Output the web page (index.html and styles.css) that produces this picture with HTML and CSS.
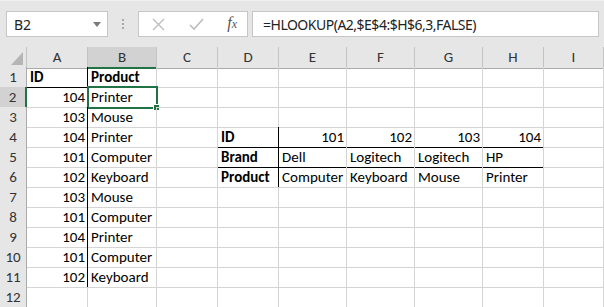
FILE: index.html
```html
<!DOCTYPE html>
<html lang="en">

<head>
    <meta charset="UTF-8">
    <meta name="viewport" content="width=device-width, initial-scale=1.0">
    <title>HLOOKUP</title>
    <link rel="stylesheet" href="styles.css">
</head>

<body>
    <header class="toolbar">
        <div class="name-box">
            <span>B2</span>
            <svg class="caret" width="8" height="5" viewBox="0 0 8 5"><path d="M0 0H8L4 5Z" fill="#7a7a7a"/></svg>
        </div>
        <div class="grip"><i></i><i></i><i></i></div>
        <div class="buttons">
            <svg width="13" height="13" viewBox="0 0 13 13"><path d="M1 1L12 12M12 1L1 12" stroke="#bdbdbd" stroke-width="1.4"/></svg>
            <svg width="15" height="13" viewBox="0 0 15 13"><path d="M1 7L5 11L14 1" stroke="#bdbdbd" stroke-width="1.6" fill="none"/></svg>
            <span class="fx">f<small>x</small></span>
        </div>
        <div class="formula">=HLOOKUP(A2,$E$4:$H$6,3,FALSE)</div>
    </header>

    <section class="sheet">
        <div class="row head">
            <div class="corner"><svg width="12" height="13" viewBox="0 0 12 13"><path d="M12 0V13H0Z" fill="#b5b5b5"/></svg></div>
            <div>A</div><div class="sel">B</div><div>C</div><div>D</div><div>E</div><div>F</div><div>G</div><div>H</div><div>I</div>
        </div>
        <div class="row">
            <div class="num">1</div>
            <div class="b bb br">ID</div><div class="b bb">Product</div><div></div><div></div><div></div><div></div><div></div><div></div><div></div>
        </div>
        <div class="row">
            <div class="num sel">2</div>
            <div class="r br">104</div><div class="active">Printer<span class="box"></span><span class="handle"></span></div><div></div><div></div><div></div><div></div><div></div><div></div><div></div>
        </div>
        <div class="row">
            <div class="num">3</div>
            <div class="r br">103</div><div>Mouse</div><div></div><div></div><div></div><div></div><div></div><div></div><div></div>
        </div>
        <div class="row">
            <div class="num">4</div>
            <div class="r br">104</div><div>Printer</div><div></div><div class="b bb br">ID</div><div class="r bb">101</div><div class="r bb">102</div><div class="r bb">103</div><div class="r bb">104</div><div></div>
        </div>
        <div class="row">
            <div class="num">5</div>
            <div class="r br">101</div><div>Computer</div><div></div><div class="b bb br">Brand</div><div class="bb">Dell</div><div class="bb">Logitech</div><div class="bb">Logitech</div><div class="bb">HP</div><div></div>
        </div>
        <div class="row">
            <div class="num">6</div>
            <div class="r br">102</div><div>Keyboard</div><div></div><div class="b br">Product</div><div>Computer</div><div>Keyboard</div><div>Mouse</div><div>Printer</div><div></div>
        </div>
        <div class="row">
            <div class="num">7</div>
            <div class="r br">103</div><div>Mouse</div><div></div><div></div><div></div><div></div><div></div><div></div><div></div>
        </div>
        <div class="row">
            <div class="num">8</div>
            <div class="r br">101</div><div>Computer</div><div></div><div></div><div></div><div></div><div></div><div></div><div></div>
        </div>
        <div class="row">
            <div class="num">9</div>
            <div class="r br">104</div><div>Printer</div><div></div><div></div><div></div><div></div><div></div><div></div><div></div>
        </div>
        <div class="row">
            <div class="num">10</div>
            <div class="r br">101</div><div>Computer</div><div></div><div></div><div></div><div></div><div></div><div></div><div></div>
        </div>
        <div class="row">
            <div class="num">11</div>
            <div class="r br">102</div><div>Keyboard</div><div></div><div></div><div></div><div></div><div></div><div></div><div></div>
        </div>
        <div class="row">
            <div class="num">12</div>
            <div></div><div></div><div></div><div></div><div></div><div></div><div></div><div></div><div></div>
        </div>
    </section>
</body>

</html>
```

FILE: styles.css
```css
* {
    margin: 0;
    padding: 0;
    box-sizing: border-box;
}

body {
    width: 604px;
    height: 307px;
    overflow: hidden;
    background-color: #e6e6e6;
    font-family: Carlito, Lato, sans-serif;
    color: black;
}

/* barra da formula */

.toolbar {
    height: 47px;
    padding: 11px 5px 0 6px;
    display: flex;
    align-items: flex-start;
    border-top: 1px solid #f0f0f0;
}

.name-box,
.buttons,
.formula {
    height: 26px;
    background-color: white;
    border: 1px solid #c6c6c6;
    display: flex;
    align-items: center;
    font-family: "Noto Sans", sans-serif;
    font-size: 14px;
    color: #222;
}

.toolbar > div {
    margin-top: -1px;
}

.name-box {
    width: 102px;
    padding: 0 6px 0 7px;
    justify-content: space-between;
}

.grip {
    width: 30px;
    height: 26px;
    display: flex;
    flex-direction: column;
    align-items: center;
    justify-content: center;
    gap: 2px;
}

.grip i {
    width: 2px;
    height: 2px;
    background-color: #a8a8a8;
}

.buttons {
    width: 110px;
    padding: 0 10px 0 13px;
    justify-content: space-between;
}

.fx {
    font-family: "Liberation Serif", serif;
    font-style: italic;
    font-size: 16px;
    color: #555;
    margin-top: -2px;
}

.fx small {
    font-size: 12px;
}

.formula {
    flex: 1;
    margin-left: 4px;
    padding-left: 10px;
    letter-spacing: -0.5px;
}

/* planilha */

.sheet {
    background-color: white;
}

.row {
    display: grid;
    grid-template-columns: 27px 61px 69px 61px 61px 68px 68px 68px 61px 1fr;
    height: 20px;
}

.row > div {
    position: relative;
    border-right: 1px solid #d4d4d4;
    border-bottom: 1px solid #d4d4d4;
    font-size: 15px;
    line-height: 19px;
    padding: 1px 2px 0 3px;
    white-space: nowrap;
}

.head > div {
    background-color: #e6e6e6;
    border-right-color: #c4c4c4;
    border-bottom-color: #ababab;
    text-align: center;
    color: #333;
    padding: 1px 0 0;
}

.head .sel {
    background-color: #d2d2d2;
    border-bottom: 2px solid #217346;
}

.corner {
    display: flex;
    align-items: flex-end;
    justify-content: flex-end;
}

.head .corner {
    padding: 0;
}

.corner svg {
    margin: 0 3px 3px 0;
}

.row > .num {
    background-color: #e6e6e6;
    border-right-color: #ababab;
    border-bottom-color: #c8c8c8;
    text-align: center;
    color: #333;
    padding: 1px 0 0;
}

.row > .num.sel {
    background-color: #d2d2d2;
    border-right: 2px solid #217346;
}

.b {
    font-weight: bold;
}

.r {
    text-align: right;
}

.row > .bb {
    border-bottom-color: black;
}

.row > .br {
    border-right-color: black;
}

.box {
    position: absolute;
    left: -1px;
    top: -1px;
    right: -2px;
    bottom: -2px;
    border: 2px solid #217346;
}

.handle {
    position: absolute;
    right: -4px;
    bottom: -4px;
    width: 7px;
    height: 7px;
    background-color: #217346;
    border: 1px solid white;
}
```
